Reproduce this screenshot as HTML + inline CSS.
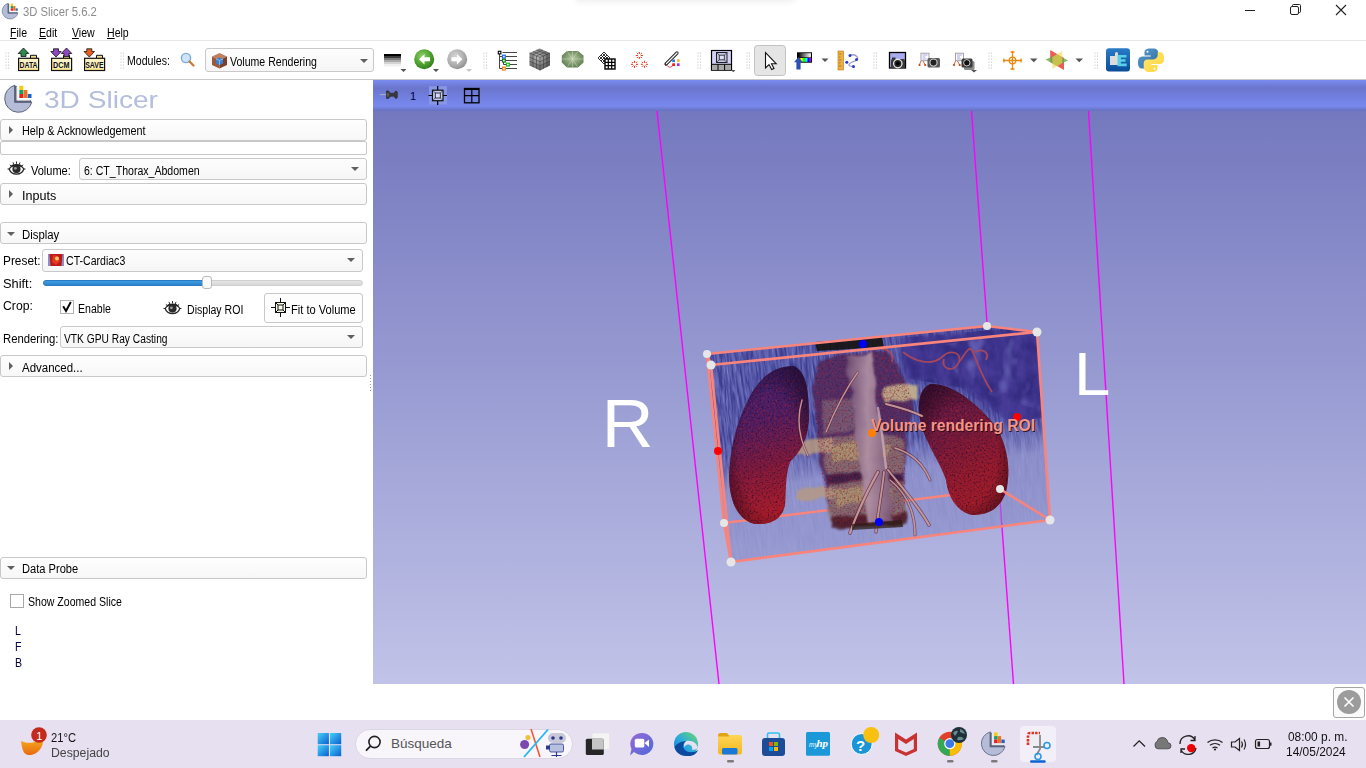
<!DOCTYPE html>
<html><head><meta charset="utf-8">
<style>
*{box-sizing:border-box;margin:0;padding:0}
html,body{width:1366px;height:768px;overflow:hidden;background:#fff;font-family:"Liberation Sans",sans-serif;font-size:12px;color:#000}
.a{position:absolute}
.t{position:absolute;white-space:nowrap;line-height:1;transform-origin:0 0;transform:scaleX(.88)}
.box{position:absolute;border:1px solid #c8c8c8;border-radius:3px;background:linear-gradient(#fefefe,#f7f7f7)}
.combo{position:absolute;border:1px solid #c9c9c9;border-radius:3px;background:linear-gradient(#fdfdfd,#f6f6f6)}
.arr{position:absolute;width:0;height:0;border-left:4px solid transparent;border-right:4px solid transparent;border-top:4px solid #606060}
.rt{position:absolute;width:0;height:0;border-top:4px solid transparent;border-bottom:4px solid transparent;border-left:4px solid #606060}
.dn{position:absolute;width:0;height:0;border-left:4px solid transparent;border-right:4px solid transparent;border-top:4px solid #606060}
.grip{position:absolute;width:5px;height:17px;background-image:radial-gradient(circle at 1px 1px,#b4b4b4 0.7px,transparent 1px);background-size:3px 3px}
svg{position:absolute;overflow:visible}
</style></head><body>
<div id="top"></div>
<!-- title bar -->
<div class="a" style="left:575px;top:-8px;width:220px;height:8px;border-radius:6px;box-shadow:0 2px 6px rgba(0,0,0,.07)"></div>
<div class="t" style="left:23px;top:6px;font-size:12.5px;color:#8c8c8c;transform:scaleX(.9)">3D Slicer 5.6.2</div>
<svg style="left:1240px;top:4px" width="110" height="14">
 <line x1="5" y1="6.5" x2="15" y2="6.5" stroke="#222" stroke-width="1"/>
 <rect x="50.5" y="2.5" width="8" height="8" rx="1.5" fill="none" stroke="#222" stroke-width="1"/>
 <path d="M52.5 2.5 V1.5 a1 1 0 0 1 1 -1 H59.5 a1 1 0 0 1 1 1 V7.5 a1 1 0 0 1 -1 1 H58.5" fill="none" stroke="#222" stroke-width="1"/>
 <path d="M96 1 L106 11 M106 1 L96 11" stroke="#222" stroke-width="1.1"/>
</svg>
<!-- menu -->
<div class="t" style="left:10px;top:27px"><u>F</u>ile</div>
<div class="t" style="left:39px;top:27px"><u>E</u>dit</div>
<div class="t" style="left:72px;top:27px"><u>V</u>iew</div>
<div class="t" style="left:107px;top:27px"><u>H</u>elp</div>
<div class="a" style="left:0;top:40px;width:1366px;height:1px;background:#e6e6e6"></div>
<!-- toolbar -->
<div class="a" style="left:0;top:79px;width:1366px;height:1px;background:#c9c9c9"></div>
<div class="t" style="left:127px;top:55px">Modules:</div>
<div class="combo" style="left:205px;top:48px;width:169px;height:24px"></div>
<div class="t" style="left:230px;top:56px">Volume Rendering</div>
<div class="arr" style="left:360px;top:59px"></div>

<!-- toolbar icons -->
<svg style="left:0;top:0" width="1366" height="80">
 <defs>
  <radialGradient id="gball" cx="0.4" cy="0.35" r="0.7"><stop offset="0" stop-color="#8fd06a"/><stop offset="0.6" stop-color="#4ea02e"/><stop offset="1" stop-color="#2e7a1a"/></radialGradient>
  <radialGradient id="wball" cx="0.4" cy="0.35" r="0.7"><stop offset="0" stop-color="#d4d4d4"/><stop offset="0.6" stop-color="#b0b0b0"/><stop offset="1" stop-color="#8c8c8c"/></radialGradient>
  <linearGradient id="hgrad" x1="0" y1="0" x2="0" y2="1"><stop offset="0" stop-color="#000"/><stop offset="0.2" stop-color="#000"/><stop offset="0.2" stop-color="#3a3a3a"/><stop offset="0.36" stop-color="#3a3a3a"/><stop offset="0.36" stop-color="#7a7a7a"/><stop offset="0.52" stop-color="#7a7a7a"/><stop offset="0.52" stop-color="#aaa"/><stop offset="0.68" stop-color="#aaa"/><stop offset="0.68" stop-color="#d4d4d4"/><stop offset="0.84" stop-color="#d4d4d4"/><stop offset="0.84" stop-color="#f0f0f0"/><stop offset="1" stop-color="#f0f0f0"/></linearGradient>
  <linearGradient id="cmgrad" x1="0" y1="0" x2="1" y2="0"><stop offset="0" stop-color="#000"/><stop offset="1" stop-color="#fff"/></linearGradient>
  <linearGradient id="rainbow" x1="0" y1="0" x2="1" y2="0"><stop offset="0" stop-color="#f00"/><stop offset="0.25" stop-color="#ff0"/><stop offset="0.45" stop-color="#0f0"/><stop offset="0.65" stop-color="#0ff"/><stop offset="0.8" stop-color="#00f"/><stop offset="1" stop-color="#f0f"/></linearGradient>
  <radialGradient id="cube" cx="0.4" cy="0.4" r="0.7"><stop offset="0" stop-color="#b8b8b8"/><stop offset="1" stop-color="#505050"/></radialGradient>
  <radialGradient id="oct" cx="0.5" cy="0.45" r="0.6"><stop offset="0" stop-color="#b4c8a4"/><stop offset="1" stop-color="#5c7a4a"/></radialGradient>
  <linearGradient id="pyb" x1="0" y1="0" x2="1" y2="1"><stop offset="0" stop-color="#5a9fd4"/><stop offset="1" stop-color="#306998"/></linearGradient>
  <linearGradient id="pyy" x1="0" y1="0" x2="1" y2="1"><stop offset="0" stop-color="#ffe873"/><stop offset="1" stop-color="#ffd43b"/></linearGradient>
  <linearGradient id="extb" x1="0" y1="0" x2="0" y2="1"><stop offset="0" stop-color="#2a7cc8"/><stop offset="1" stop-color="#0a4c98"/></linearGradient>
 </defs>
 <!-- grips -->
 <g fill="#b8b8b8">
  <g id="gr"><circle cx="6" cy="53" r=".6"/><circle cx="8.5" cy="53" r=".6"/><circle cx="6" cy="56" r=".6"/><circle cx="8.5" cy="56" r=".6"/><circle cx="6" cy="59" r=".6"/><circle cx="8.5" cy="59" r=".6"/><circle cx="6" cy="62" r=".6"/><circle cx="8.5" cy="62" r=".6"/><circle cx="6" cy="65" r=".6"/><circle cx="8.5" cy="65" r=".6"/><circle cx="6" cy="68" r=".6"/><circle cx="8.5" cy="68" r=".6"/></g>
  <use href="#gr" x="115"/><use href="#gr" x="478"/><use href="#gr" x="692"/><use href="#gr" x="741"/><use href="#gr" x="868"/><use href="#gr" x="983"/><use href="#gr" x="1089"/>
 </g>
 <!-- DATA / DCM / SAVE -->
 <g id="fold">
  <path d="M30.5 58.5 V55.3 H36.5 V58.5" fill="#f2e08a" stroke="#111" stroke-width="1"/>
  <rect x="18.6" y="58.3" width="20" height="12.2" fill="#fbf2c4" stroke="#111" stroke-width="1.2"/>
  <rect x="19.2" y="68.6" width="18.8" height="1.4" fill="#e8d47a"/>
 </g>
 <use href="#fold" x="33"/><use href="#fold" x="66"/>
 <g font-family="Liberation Sans" font-weight="bold" font-size="8.2" fill="#111" lengthAdjust="spacingAndGlyphs">
  <text x="19.5" y="67.6" textLength="18" lengthAdjust="spacingAndGlyphs">DATA</text>
  <text x="53" y="67.6" textLength="16.5" lengthAdjust="spacingAndGlyphs">DCM</text>
  <text x="85.2" y="67.6" textLength="18.5" lengthAdjust="spacingAndGlyphs">SAVE</text>
 </g>
 <path d="M23.5 48 L28.8 53.5 H26 V56.5 H21 V53.5 H18.2 Z" fill="#2e8a4e" stroke="#111" stroke-width=".8"/>
 <path d="M56 57 L50.8 51.5 H53.5 V48.8 H58.5 V51.5 H61.2 Z" fill="#9048c0" stroke="#111" stroke-width=".8"/>
 <path d="M66.5 48 L71.8 53.5 H69 V56.5 H64 V53.5 H61.2 Z" fill="#9048c0" stroke="#111" stroke-width=".8"/>
 <path d="M89.3 57 L84 51.5 H86.8 V48.8 H91.8 V51.5 H94.5 Z" fill="#e8601c" stroke="#111" stroke-width=".8"/>
 <!-- search -->
 <circle cx="186" cy="58" r="4.6" fill="#cfe4f8" stroke="#7aaad8" stroke-width="1.4"/>
 <path d="M189.5 61.5 L193.5 65.5" stroke="#c88038" stroke-width="2.4" stroke-linecap="round"/>
 <!-- module combo icon -->
 <path d="M212 56.5 L219.5 53 L227 56.5 L219.5 60 Z" fill="#c08060"/>
 <path d="M212 56.5 L219.5 60 V68.5 L212 65 Z" fill="#9a5a3a"/>
 <path d="M227 56.5 L219.5 60 V68.5 L227 65 Z" fill="#7a4028"/>
 <path d="M216 59 L219.5 57.5 L223 59 V63.5 L219.5 65 L216 63.5 Z" fill="#3a80d0"/>
 <path d="M216 59 L219.5 60.5 L223 59 M219.5 60.5 V65" stroke="#a8d0f8" stroke-width=".7" fill="none"/>
 <!-- gradient / nav -->
 <rect x="384" y="54" width="17" height="12.5" fill="url(#hgrad)"/>
 <path d="M400.5 69 h6 l-3 3 z M433 69 h6 l-3 3 z" fill="#555"/>
 <path d="M466 69 h6 l-3 3 z" fill="#c8c8c8"/>
 <circle cx="424.2" cy="59.3" r="10" fill="url(#gball)"/>
 <path d="M419 59.3 L424.5 54 V57.3 H430 V61.3 H424.5 V64.6 Z" fill="#fff"/>
 <circle cx="457.2" cy="59.3" r="10" fill="url(#wball)"/>
 <path d="M462.4 59.3 L456.9 54 V57.3 H451.4 V61.3 H456.9 V64.6 Z" fill="#fff"/>
 <!-- tree -->
 <g stroke="#444" stroke-width="1" fill="none">
  <path d="M502.5 52.5 H517 M506 56.5 H517 M506 60.5 H517 M510 64.5 H517 M506 68.5 H517"/>
  <path d="M499.5 54 V68.5 H502 M499.5 56.5 H502 M499.5 60.5 H502 M503.5 62 V64.5 H506"/>
 </g>
 <rect x="498.3" y="51.3" width="2.6" height="2.6" fill="#fff" stroke="#000" stroke-width="1.1"/>
 <rect x="502.5" y="55.2" width="2.8" height="2.8" fill="#fff" stroke="#1a6ae8" stroke-width="1.2"/>
 <rect x="502.5" y="59.2" width="2.8" height="2.8" fill="#fff" stroke="#0a7a1a" stroke-width="1.2"/>
 <rect x="506.5" y="63.2" width="2.8" height="2.8" fill="#fff" stroke="#1ab81a" stroke-width="1.2"/>
 <rect x="502.5" y="67.2" width="2.8" height="2.8" fill="#fff" stroke="#f08010" stroke-width="1.2"/>
 <!-- cube -->
 <path d="M539.5 48.5 L550 53 V65.5 L540 70.5 L529.5 65.5 V53 Z" fill="url(#cube)"/>
 <g stroke="#303030" stroke-width=".6" opacity=".8" fill="none">
  <path d="M529.5 53 L540 57.5 L550 53 M540 57.5 V70.5 M533 51.5 L543.5 56 M536.5 50 L547 54.5 M543 50 L533 54.6 M546.5 51.5 L536.5 56 M529.5 57.2 L540 61.7 L550 57.2 M529.5 61.3 L540 65.8 L550 61.3 M533 54.5 V67.2 M536.5 56 V68.8 M543.5 56 V68.8 M547 54.5 V67.2"/>
 </g>
 <!-- octagon -->
 <path d="M567 51 H578 L583.5 55.5 V62.5 L578 67.5 H567 L561.8 62.5 V55.5 Z" fill="url(#oct)"/>
 <path d="M567 51 L578 67.5 M578 51 L567 67.5 M561.8 59 H583.5 M572.5 51 V67.5" stroke="#d8e8c8" stroke-width=".6" opacity=".7"/>
 <!-- grid -->
 <g stroke="#000" stroke-width=".8" fill="none">
  <path d="M598 58 L604 52 L610 58 L604 64 Z M601 55 L607 61 M601 61 L607 55 M599.5 56.5 L605.5 62.5 M602.5 53.5 L608.5 59.5 M599.5 59.5 L605.5 53.5 M602.5 62.5 L608.5 56.5"/>
 </g>
 <rect x="605" y="59" width="10" height="10" fill="#fff" stroke="#000" stroke-width="1.4"/>
 <path d="M608.3 59 V69 M611.7 59 V69 M605 62.3 H615 M605 65.7 H615" stroke="#000" stroke-width="1.2"/>
 <!-- asterisks -->
 <g stroke="#e82a10" stroke-width="1" id="ast">
  <path d="M639.3 52 V54 M639.3 57 V59 M635.8 55.5 H637.8 M640.8 55.5 H642.8 M636.8 53 L638 54.2 M640.6 56.8 L641.8 58 M641.8 53 L640.6 54.2 M638 56.8 L636.8 58"/>
 </g>
 <use href="#ast" x="-4.8" y="8.8"/><use href="#ast" x="5.1" y="8.8"/>
 <!-- paint -->
 <path d="M666 64 L677 53" stroke="#222" stroke-width="3.2" stroke-linecap="round"/>
 <path d="M666.5 63.5 L677 53" stroke="#f4f4f4" stroke-width="1.4" stroke-linecap="round"/>
 <path d="M666 64.5 Q670 70 673.5 64.5" stroke="#e03050" stroke-width=".9" fill="none"/>
 <rect x="672.2" y="59.5" width="2.8" height="2.6" fill="#2a7ae8"/><rect x="677" y="59.2" width="2.6" height="2.8" fill="#f8b818"/>
 <rect x="672.2" y="63.3" width="2.8" height="2.8" fill="#e82020"/><rect x="677" y="63.3" width="2.6" height="2.8" fill="#b028e0"/>
 <!-- layout -->
 <rect x="711.5" y="50.5" width="20" height="19.7" fill="#d2d2f4" stroke="#000" stroke-width="1.2"/>
 <rect x="712" y="64.5" width="19" height="5.4" fill="#a8a8a8"/>
 <path d="M711.5 64.3 H731.5 M718 64.3 V70 M724.6 64.3 V70" stroke="#000" stroke-width="1"/>
 <rect x="716.5" y="52.5" width="10.5" height="10" fill="#c4c4e8" stroke="#222" stroke-width="1"/>
 <rect x="719.3" y="55.2" width="5" height="4.6" fill="#e0e0f4" stroke="#333" stroke-width=".9"/>
 <path d="M716.5 52.5 L719.3 55.2 M727 52.5 L724.3 55.2 M716.5 62.5 L719.3 59.8 M727 62.5 L724.3 59.8" stroke="#333" stroke-width=".7"/>
 <path d="M731 70 h4.5 l-2.2 2.2 z" fill="#555"/>
 <!-- selected pointer -->
 <rect x="754.5" y="45.5" width="31" height="30" rx="3" fill="#e5e5e5" stroke="#c2c2c2" stroke-width="1"/>
 <path d="M765.5 52.5 V68 L769 64.6 L771.7 69.5 L774 68.4 L771.5 63.7 H776.2 Z" fill="#fff" stroke="#111" stroke-width="1.1" stroke-linejoin="miter"/>
 <!-- colormap -->
 <rect x="797" y="52.3" width="15" height="10.4" fill="#000"/>
 <rect x="798.3" y="53.2" width="12.6" height="4.2" fill="url(#cmgrad)"/>
 <rect x="798.3" y="58" width="12.6" height="3.8" fill="url(#rainbow)"/>
 <path d="M798.5 57 L803 62.3 H800.6 V69.5 H796.4 V62.3 H794 Z" fill="#2a50b8"/>
 <path d="M821.5 58.5 h7 l-3.5 3.5 z" fill="#555"/>
 <!-- ruler curve -->
 <rect x="838" y="51" width="5.5" height="19" fill="#f0b040" stroke="#b07818" stroke-width=".6"/>
 <path d="M839 54 h2.5 M839 57 h1.5 M839 60 h2.5 M839 63 h1.5 M839 66 h2.5" stroke="#805010" stroke-width=".6"/>
 <path d="M850 55.5 C856 53 861 59 855 61 C849 63 846 66 853 66.5" stroke="#9a9ac8" stroke-width="1.3" fill="none"/>
 <g fill="#2a3ad0"><circle cx="850" cy="55.5" r="1.5"/><circle cx="856.5" cy="59.5" r="1.5"/><circle cx="846.8" cy="62.2" r="1.5"/><circle cx="853.5" cy="66.5" r="1.5"/></g>
 <!-- camera -->
 <rect x="889.5" y="52.5" width="16" height="15.5" fill="#a8acee" stroke="#000" stroke-width="1.3"/>
 <rect x="892" y="57.5" width="3.5" height="2" fill="#333"/>
 <rect x="891" y="59" width="14" height="9" rx="1.5" fill="#3a3a3a"/>
 <circle cx="897.8" cy="63.6" r="4.2" fill="#222" stroke="#e8e8e8" stroke-width="1.3"/>
 <circle cx="897.8" cy="63.6" r="1.8" fill="#000"/>
 <g id="scam">
  <rect x="921" y="53.2" width="8" height="7.5" fill="#fff" stroke="#999" stroke-width=".9"/>
  <path d="M922.5 55 h5 M922.5 57 h3 M922.5 59 h4" stroke="#6a6ad8" stroke-width=".6"/>
  <path d="M921 61 L919.5 64.5 M923 61 L925 64.5" stroke="#c04010" stroke-width=".8"/>
  <circle cx="919.5" cy="65" r="1.1" fill="#c84010"/><circle cx="925.2" cy="65" r="1.1" fill="#c84010"/>
 </g>
 <rect x="927.5" y="58" width="12.5" height="9.5" rx="1.5" fill="#5a5a5a"/>
 <circle cx="933.5" cy="62.6" r="3.6" fill="#222" stroke="#d0d0d0" stroke-width="1.1"/>
 <use href="#scam" x="34.5"/>
 <rect x="964" y="61" width="10.5" height="9" rx="1.5" fill="#8a8a8a"/>
 <rect x="961.5" y="58.5" width="11" height="9" rx="1.5" fill="#3a3a3a"/>
 <circle cx="966.8" cy="62.8" r="3.2" fill="#111" stroke="#ccc" stroke-width="1"/>
 <path d="M971 70 h6 l-3 2.6 z" fill="#555"/>
 <!-- crosshair -->
 <g stroke="#e88a10" stroke-width="1.3" fill="none">
  <path d="M1012.5 51 V70 M1003 60.5 H1022"/>
  <circle cx="1012.5" cy="60.5" r="3.3"/>
  <path d="M1010.5 52 h4 M1010.5 69 h4 M1004 58.5 v4 M1021 58.5 v4"/>
 </g>
 <path d="M1030 58.5 h7.5 l-3.75 3.7 z M1075.5 58.5 h7.5 l-3.75 3.7 z" fill="#555"/>
 <!-- slice planes -->
 <path d="M1050.2 50 L1064 58 L1064 70 L1050.2 62 Z" fill="#e84038" opacity=".85"/>
 <path d="M1045.5 59.5 L1057 54.5 L1068 60.5 L1056.5 66 Z" fill="#6aaa48" opacity=".8"/>
 <path d="M1052.4 57 L1062.3 51 L1062.3 63 L1052.4 69 Z" fill="#f4d850" opacity=".6"/>
 <!-- extension -->
 <rect x="1106" y="48.2" width="24" height="23.4" rx="3" fill="url(#extb)"/>
 <path d="M1110 56 h5 v-2.5 a1.5 1.5 0 0 1 3 0 v2.5 h2 v9 h-10 z" fill="#dcdcdc"/>
 <path d="M1117.5 55 h9 v2.6 h-5.6 v1.7 h4.6 v2.5 h-4.6 v1.8 h5.8 v2.6 h-9.2 z" fill="#5ad0e8"/>
 <!-- python -->
 <path d="M1150.5 48.5 c-6 0 -6 2.6 -6 4.5 v2.6 h6.2 v1 h-8.6 c-2.6 0 -4.2 2 -4.2 6 c0 4 1.6 6 4 6 h2.4 v-3.2 c0 -2.4 2 -4.3 4.4 -4.3 h6 c2 0 3.6 -1.6 3.6 -3.6 v-4.6 c0 -2 -1.7 -3.9 -3.8 -4.3 c-1.3 -.2 -2.6 -.1 -4 -.1 z" fill="url(#pyb)"/>
 <path d="M1151.5 72 c6 0 6 -2.6 6 -4.5 v-2.6 h-6.2 v-1 h8.6 c2.6 0 4.2 -2 4.2 -6 c0 -4 -1.6 -6 -4 -6 h-2.4 v3.2 c0 2.4 -2 4.3 -4.4 4.3 h-6 c-2 0 -3.6 1.6 -3.6 3.6 v4.6 c0 2 1.7 3.9 3.8 4.3 c1.3 .2 2.6 .1 4 .1 z" fill="url(#pyy)"/>
 <circle cx="1147.5" cy="51.8" r="1" fill="#fff"/><circle cx="1154.5" cy="68.8" r="1" fill="#fff"/>
 <!-- title icon -->
 <use href="#logo" transform="translate(2.2 3) scale(.58) translate(-4.7 -84.7)"/>
</svg>

<!-- left panel -->
<div class="t" style="left:44px;top:88px;font-size:24px;color:#b4bedc;transform:scaleX(1.17)">3D Slicer</div>

<div class="box" style="left:0;top:119px;width:367px;height:22px"></div>
<div class="rt" style="left:9px;top:126px"></div>
<div class="t" style="left:22px;top:125px;transform:scaleX(0.904)">Help &amp; Acknowledgement</div>
<div class="a" style="left:0;top:141px;width:367px;height:14px;border:1px solid #c8c8c8;border-radius:2px"></div>
<div class="t" style="left:31px;top:165px;transform:scaleX(0.917)">Volume:</div>
<div class="combo" style="left:79px;top:158px;width:288px;height:22px"></div>
<div class="t" style="left:84px;top:165px">6: CT_Thorax_Abdomen</div>
<div class="arr" style="left:351px;top:167px"></div>
<div class="box" style="left:0;top:183px;width:367px;height:22px"></div>
<div class="rt" style="left:9px;top:190px"></div>
<div class="t" style="left:22px;top:190px;transform:scaleX(1.046)">Inputs</div>

<div class="box" style="left:0;top:222px;width:367px;height:22px"></div>
<div class="dn" style="left:7px;top:232px"></div>
<div class="t" style="left:22px;top:229px;transform:scaleX(0.946)">Display</div>
<div class="t" style="left:3px;top:255px;transform:scaleX(0.988)">Preset:</div>
<div class="combo" style="left:42px;top:249px;width:321px;height:23px"></div>
<div class="t" style="left:66px;top:255px">CT-Cardiac3</div>
<div class="arr" style="left:347px;top:258px"></div>
<div class="t" style="left:3px;top:278px;transform:scaleX(1.069)">Shift:</div>
<div class="a" style="left:43px;top:280px;width:320px;height:6px;border-radius:3px;background:linear-gradient(#e6e6e6,#d8d8d8);border:1px solid #cfcfcf"></div>
<div class="a" style="left:43px;top:280px;width:163px;height:6px;border-radius:3px;background:linear-gradient(#3f9be0,#2a85d0);border:1px solid #2a7bc4"></div>
<div class="a" style="left:202px;top:276px;width:10px;height:13px;border-radius:3px;background:#fafafa;border:1px solid #b8b8b8"></div>
<div class="t" style="left:3px;top:300px;transform:scaleX(1.018)">Crop:</div>
<div class="a" style="left:60px;top:300px;width:14px;height:14px;border:1px solid #b4b4b4;background:#fff"></div>
<div class="t" style="left:78px;top:303px">Enable</div>
<div class="t" style="left:187px;top:304px">Display ROI</div>
<div class="box" style="left:264px;top:293px;width:99px;height:30px;background:#fdfdfd"></div>
<div class="t" style="left:291px;top:304px;transform:scaleX(0.925)">Fit to Volume</div>
<div class="t" style="left:3px;top:333px;transform:scaleX(0.943)">Rendering:</div>
<div class="combo" style="left:60px;top:326px;width:303px;height:22px"></div>
<div class="t" style="left:64px;top:333px;transform:scaleX(0.853)">VTK GPU Ray Casting</div>
<div class="arr" style="left:347px;top:335px"></div>
<div class="box" style="left:0;top:355px;width:367px;height:22px"></div>
<div class="rt" style="left:9px;top:362px"></div>
<div class="t" style="left:22px;top:362px;transform:scaleX(0.957)">Advanced...</div>
<svg style="left:369px;top:374px" width="4" height="20"><g fill="#9a9a9a"><rect x="1" y="1" width="1" height="1"/><rect x="1" y="4" width="1" height="1"/><rect x="1" y="7" width="1" height="1"/><rect x="1" y="10" width="1" height="1"/><rect x="1" y="13" width="1" height="1"/><rect x="1" y="16" width="1" height="1"/></g></svg>

<div class="box" style="left:0;top:557px;width:367px;height:22px"></div>
<div class="dn" style="left:7px;top:566px"></div>
<div class="t" style="left:22px;top:563px;transform:scaleX(0.925)">Data Probe</div>
<div class="a" style="left:10px;top:594px;width:14px;height:14px;border:1px solid #a8a8a8;background:#fff"></div>
<div class="t" style="left:28px;top:596px">Show Zoomed Slice</div>
<div class="t" style="left:15px;top:625px;color:#000040">L</div>
<div class="t" style="left:15px;top:641px;color:#000040">F</div>
<div class="t" style="left:15px;top:657px;color:#000040">B</div>

<svg style="left:0;top:0" width="372" height="680">
 <defs>
  <g id="logo">
   <path d="M15 85.15 A13.8 13.8 0 1 0 31.85 102 L15 102 Z" fill="#b4bcd8" stroke="#505870" stroke-width=".9"/>
   <path d="M15.5 86 V101.5 H31" fill="none" stroke="#59627a" stroke-width="2.6"/>
   <path d="M17.2 87 V100 H30" fill="none" stroke="#e8f0f0" stroke-width="1.2"/>
   <rect x="19.3" y="85.8" width="4" height="4.2" fill="#f2cc10"/><rect x="19.3" y="90" width="4" height="4" fill="#18a060"/><rect x="19.3" y="94" width="4" height="4" fill="#e82020"/>
   <rect x="23.6" y="90" width="3.8" height="8" fill="#f07020"/><rect x="27.7" y="94" width="3.8" height="4" fill="#2060c8"/>
  </g>
  <g id="eye">
   <path d="M1.2 7.5 C4 2.2 13 2.2 15.8 7.5 C13.8 14.2 3.2 14.2 1.2 7.5 Z" fill="#fff" stroke="#2a2a2a" stroke-width="1.3"/>
   <circle cx="8.5" cy="7.6" r="4.1" fill="#2a2a2a"/><circle cx="7.4" cy="6.8" r="1.4" fill="#9a9a9a"/>
   <path d="M3 5 C5 2.6 12 2.6 14 5" fill="none" stroke="#222" stroke-width="1.6"/>
   <path d="M-.5 7.5 H1.8 M1.8 3.3 L3.4 4.7 M5 .9 L5.8 3 M8.5 0 V2.3 M12 .9 L11.2 3 M15.2 3.3 L13.6 4.7 M17.5 7.5 H15.2" stroke="#2a2a2a" stroke-width="1"/>
  </g>
 </defs>
 <use href="#logo"/>
 <use href="#eye" x="8" y="161.5"/>
 <use href="#eye" x="164" y="301"/>
 <rect x="48" y="254" width="16" height="12" fill="#8a90c8"/>
 <path d="M49.5 254 H62.5 L61.5 266 H50.5 Z" fill="#c01818"/>
 <path d="M53 255 L58 256 L60 261 L56 265 L52 262 Z" fill="#e03a20"/>
 <circle cx="57" cy="258.5" r="2" fill="#e8d060"/>
 <path d="M63.2 306.3 L66 311 L70.8 302" fill="none" stroke="#000" stroke-width="1.9" stroke-linejoin="miter"/>
 <g stroke="#111" stroke-width="1" fill="none">
  <path d="M280.5 298 V317 M271 307.5 H290"/>
  <rect x="275.5" y="302.5" width="10" height="10" fill="#fbfbee"/>
  <rect x="278" y="305" width="5" height="5"/>
  <path d="M275.5 302.5 L278 305 M285.5 302.5 L283 305 M275.5 312.5 L278 310 M285.5 312.5 L283 310"/>
 </g>
</svg>
<!-- 3D view -->
<div class="a" style="left:373px;top:80px;width:993px;height:604px;background:linear-gradient(#7478be 31px,#c1c3e8)"></div>
<div class="a" style="left:373px;top:80px;width:993px;height:31px;background:linear-gradient(#7a8cf2 0px,#6b75cb 8px,#7280e2 18px,#7888ee 26px,#6e7ad0 29px,#6670c2 31px)"></div>
<div class="t" style="left:410px;top:91px;font-size:11px;color:#000030;transform:none">1</div>
<svg style="left:0;top:0" width="500" height="112">
 <path d="M380 94.6 H387" stroke="#b0b0b8" stroke-width="1"/>
 <path d="M386.5 91 Q388.5 90.3 389.5 92 L390 93.2 H394.5 L395 91.5 Q396.5 90.5 397.3 92 V97.5 Q396.5 99 395 98 L394.5 96.2 H390 L389.5 97.4 Q388.5 99.2 386.5 98.3 Z" fill="#3a3a3a" stroke="#222" stroke-width=".6"/>
 <path d="M388 93 V96.5" stroke="#8a8a8a" stroke-width=".8"/>
 <rect x="429" y="86.2" width="18" height="18.4" fill="#8896e6"/>
 <path d="M437.7 86 V105 M428.5 95.5 H447" stroke="#000" stroke-width="1.2"/>
 <rect x="432.5" y="90.2" width="10.5" height="10.5" fill="#c4ccf6" stroke="#111" stroke-width="1.2"/>
 <rect x="435.3" y="93" width="5" height="5" fill="#d8dcfa" stroke="#222" stroke-width=".9"/>
 <path d="M432.5 90.2 L435.3 93 M443 90.2 L440.3 93 M432.5 100.7 L435.3 98 M443 100.7 L440.3 98" stroke="#222" stroke-width=".6"/>
 <rect x="464.5" y="88.5" width="14.5" height="14.3" fill="none" stroke="#000" stroke-width="1.3"/>
 <path d="M464.5 89.2 H479" stroke="#000" stroke-width="1.6"/>
 <path d="M471.8 88.5 V102.8 M464.5 95.6 H479" stroke="#000" stroke-width="1.2"/>
</svg>
<svg style="left:373px;top:111px" width="993" height="573">
 <g stroke="#ff00ff" stroke-width="1.4" fill="none">
  <line x1="284" y1="0" x2="346" y2="573"/>
  <line x1="598.5" y1="0" x2="640.5" y2="573"/>
  <line x1="715.5" y1="0" x2="751" y2="573"/>
 </g>
 <text transform="translate(228.7 336) scale(1.06 1)" font-family="Liberation Sans" font-size="67.7" fill="#fff">R</text>
 <text transform="translate(701 284) scale(1.06 1)" font-family="Liberation Sans" font-size="61.6" fill="#fff">L</text>
</svg>


<!-- volume rendering -->
<svg style="left:0;top:0" width="1366" height="768">
 <defs>
  <filter id="streak" color-interpolation-filters="sRGB" x="0" y="0" width="100%" height="100%" filterUnits="userSpaceOnUse">
   <feTurbulence type="fractalNoise" baseFrequency="0.55 0.04" numOctaves="3" seed="7" result="n"/>
   <feColorMatrix in="n" type="matrix" values="0 0 0 0 0.24  0 0 0 0 0.24  0 0 0 0 0.56  -3.4 0 0 0 2.15" result="c"/>
   <feComposite in="c" in2="SourceGraphic" operator="in"/>
  </filter>
  <filter id="streakL" color-interpolation-filters="sRGB" x="0" y="0" width="100%" height="100%" filterUnits="userSpaceOnUse">
   <feTurbulence type="fractalNoise" baseFrequency="0.6 0.05" numOctaves="2" seed="2" result="n"/>
   <feColorMatrix in="n" type="matrix" values="0 0 0 0 0.6  0 0 0 0 0.62  0 0 0 0 0.86  2.2 0 0 0 -1.25" result="c"/>
   <feComposite in="c" in2="SourceGraphic" operator="in"/>
  </filter>
  <filter id="mottle" color-interpolation-filters="sRGB" x="0" y="0" width="100%" height="100%" filterUnits="userSpaceOnUse">
   <feTurbulence type="fractalNoise" baseFrequency="0.08 0.05" numOctaves="3" seed="11" result="n"/>
   <feColorMatrix in="n" type="matrix" values="0 0 0 0 0.20  0 0 0 0 0.17  0 0 0 0 0.50  -2.4 0 0 0 1.6" result="c"/>
   <feComposite in="c" in2="SourceGraphic" operator="in"/>
  </filter>
  <filter id="mottleL" color-interpolation-filters="sRGB" x="0" y="0" width="100%" height="100%" filterUnits="userSpaceOnUse">
   <feTurbulence type="fractalNoise" baseFrequency="0.06 0.045" numOctaves="2" seed="4" result="n"/>
   <feColorMatrix in="n" type="matrix" values="0 0 0 0 0.55  0 0 0 0 0.56  0 0 0 0 0.85  3.5 0 0 0 -2.0" result="c"/>
   <feComposite in="c" in2="SourceGraphic" operator="in"/>
  </filter>
  <filter id="speck" color-interpolation-filters="sRGB" x="0" y="0" width="100%" height="100%" filterUnits="userSpaceOnUse">
   <feTurbulence type="fractalNoise" baseFrequency="0.55 0.4" numOctaves="2" seed="5" result="n"/>
   <feColorMatrix in="n" type="matrix" values="0 0 0 0 0.72  0 0 0 0 0.12  0 0 0 0 0.2  2.4 0 0 0 -1.1" result="c"/>
   <feComposite in="c" in2="SourceGraphic" operator="in"/>
  </filter>
  <filter id="dspeck" color-interpolation-filters="sRGB" x="0" y="0" width="100%" height="100%" filterUnits="userSpaceOnUse">
   <feTurbulence type="fractalNoise" baseFrequency="0.5 0.6" numOctaves="2" seed="9" result="n"/>
   <feColorMatrix in="n" type="matrix" values="0 0 0 0 0.16  0 0 0 0 0.04  0 0 0 0 0.2  3.0 0 0 0 -1.5" result="c"/>
   <feComposite in="c" in2="SourceGraphic" operator="in"/>
  </filter>
  <filter id="warp" color-interpolation-filters="sRGB" x="-10%" y="-10%" width="120%" height="120%">
   <feTurbulence type="fractalNoise" baseFrequency="0.06" numOctaves="2" seed="21" result="t"/>
   <feDisplacementMap in="SourceGraphic" in2="t" scale="8" xChannelSelector="R" yChannelSelector="G" result="d"/>
   <feGaussianBlur in="d" stdDeviation="1.1"/>
  </filter>
  <filter id="blur1" x="-20%" y="-20%" width="140%" height="140%"><feGaussianBlur stdDeviation="1"/></filter>
  <filter id="blur2" x="-20%" y="-20%" width="140%" height="140%"><feGaussianBlur stdDeviation="3"/></filter>
  <filter id="blur4" x="-30%" y="-30%" width="160%" height="160%"><feGaussianBlur stdDeviation="5"/></filter>
  <linearGradient id="kidL" x1="0" y1="0" x2="0.15" y2="1">
   <stop offset="0" stop-color="#34227a"/><stop offset="0.4" stop-color="#4a1e64"/><stop offset="0.7" stop-color="#7a1a3c"/><stop offset="1" stop-color="#a81c28"/>
  </linearGradient>
  <linearGradient id="kidR" x1="0" y1="0" x2="0.35" y2="1">
   <stop offset="0" stop-color="#5a1a4a"/><stop offset="0.45" stop-color="#6c1a3c"/><stop offset="0.8" stop-color="#901a2c"/><stop offset="1" stop-color="#9a1c28"/>
  </linearGradient>
  <linearGradient id="vert" x1="0" y1="0" x2="0" y2="1"><stop offset="0" stop-color="#a89478"/><stop offset=".45" stop-color="#8c7070"/><stop offset="1" stop-color="#6a4468"/></linearGradient>
  <linearGradient id="aorta" x1="0" y1="0" x2="1" y2="0"><stop offset="0" stop-color="#6e4c72"/><stop offset=".45" stop-color="#b090a4"/><stop offset="1" stop-color="#7a5676"/></linearGradient>
  <radialGradient id="kshade" cx=".5" cy=".55" r=".62"><stop offset="0" stop-color="#000" stop-opacity="0"/><stop offset=".6" stop-color="#000" stop-opacity="0"/><stop offset="1" stop-color="#100418" stop-opacity=".55"/></radialGradient>
  <linearGradient id="fade" x1="0" y1="0" x2="0" y2="1">
   <stop offset="0" stop-color="#fff"/><stop offset="0.47" stop-color="#fff"/><stop offset="0.6" stop-color="#303030"/><stop offset="1" stop-color="#101010"/>
  </linearGradient>
  <mask id="fm" maskUnits="userSpaceOnUse" x="690" y="310" width="380" height="270">
   <rect x="690" y="310" width="380" height="270" fill="url(#fade)" transform="rotate(-7 880 440)"/>
  </mask>
  <clipPath id="hull"><path d="M707 354 L987 326 L1037 332 L1050 520 L731 562 L724 523 Z"/></clipPath>
 </defs>
 <g clip-path="url(#hull)">
  <path d="M707 354 L987 326 L1037 332 L1050 520 L731 562 L724 523 Z" fill="#8c8ecc" opacity="0.45"/>
  <g mask="url(#fm)">
   <path d="M707 354 L987 326 L1037 332 L1050 520 L731 562 L724 523 Z" fill="#5254aa" opacity="0.72"/>
   <g transform="rotate(-6 880 440)">
    <rect x="660" y="290" width="440" height="300" fill="#fff" filter="url(#streak)"/>
    <rect x="660" y="290" width="440" height="300" fill="#fff" filter="url(#streakL)"/>
   </g>
  </g>
  
  <path d="M900 338 L1040 326 L1042 418 L1012 424 L985 405 L962 388 L935 383 L905 378 Z" fill="#443894" opacity=".92" filter="url(#blur2)"/>
  <path d="M900 338 L1040 326 L1042 418 L1012 424 L985 405 L962 388 L935 383 L905 378 Z" fill="#fff" filter="url(#mottle)"/>
  <path d="M940 345 L1040 330 L1042 410 L1000 400 L960 380 Z" fill="#fff" filter="url(#mottleL)" opacity=".45"/>
 </g>
 <path d="M724 523 L1000 489" stroke="#f8847c" stroke-width="2.4" fill="none"/>
 <!-- spine / central -->
 <g filter="url(#warp)">
 <path d="M818 362 C830 356 870 350 885 352 C900 365 912 385 912 410 C905 430 906 455 905 480 L905 520 C880 526 855 528 835 524 C825 500 820 470 818 440 C814 410 812 380 818 362 Z" fill="#4c2c62" opacity=".92"/>
 <path d="M826 440 C845 434 880 433 903 439 C905 452 905 464 903 474 C880 470 848 472 828 478 C824 466 824 452 826 440 Z" fill="#8c7474" opacity=".85"/>
 <path d="M828 484 C846 479 878 477 904 481 C906 494 906 506 905 518 C880 516 850 518 832 522 C828 510 827 496 828 484 Z" fill="#8c7474" opacity=".85"/>
 <path d="M832 446 C850 442 870 442 890 446 L888 458 C870 456 850 458 834 462 Z" fill="#b8a470" opacity=".7"/>
 <path d="M834 490 C852 486 872 486 892 490 L890 503 C872 501 852 503 836 507 Z" fill="#b8a470" opacity=".65"/>
 <path d="M826 476 C848 472 880 471 903 475 L903 482 C880 479 848 481 827 485 Z" fill="#3a1a40" opacity=".85"/>
 <path d="M797 444 C808 439 820 437 832 440 L832 452 C820 452 808 455 797 454 Z" fill="#b89a80" opacity=".85"/>
 <path d="M796 490 C808 486 822 486 834 489 L834 499 C822 498 808 501 796 500 Z" fill="#b89a80" opacity=".8"/>
 <path d="M884 388 C896 383 908 383 918 386 L917 400 C906 400 895 401 884 404 Z" fill="#c8b48c" opacity=".9"/>
 <path d="M822 402 C838 398 852 398 862 401 L860 430 C848 430 836 432 824 436 Z" fill="#8a7480" opacity=".6"/>
 <path d="M832 517 L905 513 L906 524 L834 528 Z" fill="#4a1e28" opacity=".9"/>
 </g>
 <path d="M818 362 C830 356 870 350 885 352 C900 365 912 385 912 410 C905 430 906 455 905 480 L905 520 C880 526 855 528 835 524 C825 500 820 470 818 440 C814 410 812 380 818 362 Z" fill="#fff" filter="url(#speck)" opacity=".55"/>
 <path d="M818 362 C830 356 870 350 885 352 C900 365 912 385 912 410 C905 430 906 455 905 480 L905 520 C880 526 855 528 835 524 C825 500 820 470 818 440 C814 410 812 380 818 362 Z" fill="#fff" filter="url(#dspeck)" opacity=".4"/>
 <path d="M846 356 L871 352 L894 520 L868 524 Z" fill="url(#aorta)" opacity=".95" filter="url(#warp)"/>
 <!-- left kidney -->
 <path d="M794 366 C805 372 809 385 809 418 C808 440 800 452 790 462 C785 475 786 495 785 505 C782 520 770 525 755 524 C740 521 730 505 729 478 C730 450 735 425 749 398 C758 380 772 366 794 366 Z" fill="url(#kidL)"/>
 <path d="M794 366 C805 372 809 385 809 418 C808 440 800 452 790 462 C785 475 786 495 785 505 C782 520 770 525 755 524 C740 521 730 505 729 478 C730 450 735 425 749 398 C758 380 772 366 794 366 Z" fill="#fff" filter="url(#speck)" opacity="0.7"/>
 <path d="M794 366 C805 372 809 385 809 418 C808 440 800 452 790 462 C785 475 786 495 785 505 C782 520 770 525 755 524 C740 521 730 505 729 478 C730 450 735 425 749 398 C758 380 772 366 794 366 Z" fill="#fff" filter="url(#dspeck)" opacity="0.7"/>
 <path d="M794 366 C805 372 809 385 809 418 C808 440 800 452 790 462 C785 475 786 495 785 505 C782 520 770 525 755 524 C740 521 730 505 729 478 C730 450 735 425 749 398 C758 380 772 366 794 366 Z" fill="url(#kshade)"/>
 <!-- right kidney -->
 <path d="M930 384 C950 383 975 400 997 428 C1008 448 1011 470 1006 492 C1000 508 990 515 972 515 C958 512 948 498 946 480 C940 462 930 450 922 428 C917 410 917 390 930 384 Z" fill="url(#kidR)"/>
 <path d="M930 384 C950 383 975 400 997 428 C1008 448 1011 470 1006 492 C1000 508 990 515 972 515 C958 512 948 498 946 480 C940 462 930 450 922 428 C917 410 917 390 930 384 Z" fill="#fff" filter="url(#speck)" opacity="0.7"/>
 <path d="M930 384 C950 383 975 400 997 428 C1008 448 1011 470 1006 492 C1000 508 990 515 972 515 C958 512 948 498 946 480 C940 462 930 450 922 428 C917 410 917 390 930 384 Z" fill="#fff" filter="url(#dspeck)" opacity="0.7"/>
 <path d="M930 384 C950 383 975 400 997 428 C1008 448 1011 470 1006 492 C1000 508 990 515 972 515 C958 512 948 498 946 480 C940 462 930 450 922 428 C917 410 917 390 930 384 Z" fill="url(#kshade)"/>
 <!-- vessels -->
 <g stroke="#4a1424" fill="none" opacity="0.55" stroke-linecap="round">
  <path d="M886 404 C898 407 910 410 922 416" stroke-width="3.6"/>
  <path d="M878 472 C868 490 858 510 850 533" stroke-width="3.8"/>
  <path d="M884 472 C882 492 878 512 876 532" stroke-width="3.4"/>
  <path d="M888 470 C900 485 918 505 929 525" stroke-width="3.6"/>
  <path d="M895 448 C908 452 922 460 930 480" stroke-width="3"/>
  <path d="M890 480 C905 492 915 510 915 535" stroke-width="3"/>
  <path d="M858 372 C845 390 835 410 826 432" stroke-width="2.6"/>
  <path d="M808 456 C800 440 796 420 802 400" stroke-width="2.6"/>
 </g>
 <g stroke="#c89a9c" fill="none" opacity="0.95" stroke-linecap="round">
  <path d="M886 404 C898 407 910 410 922 416" stroke-width="2"/>
  <path d="M878 472 C868 490 858 510 850 533" stroke-width="2.2"/>
  <path d="M884 472 C882 492 878 512 876 532" stroke-width="1.8"/>
  <path d="M888 470 C900 485 918 505 929 525" stroke-width="2"/>
  <path d="M895 448 C908 452 922 460 930 480" stroke-width="1.6"/>
  <path d="M890 480 C905 492 915 510 915 535" stroke-width="1.6"/>
  <path d="M858 372 C845 390 835 410 826 432" stroke-width="1.4"/>
  <path d="M808 456 C800 440 796 420 802 400" stroke-width="1.4"/>
  <path d="M878 408 C882 430 884 450 886 468" stroke-width="2.4" stroke="#d8b8c0" opacity=".7"/>
 </g>
 <g stroke="#b04858" stroke-width="1.8" fill="none" opacity="0.9">
  <path d="M903 352 C915 362 932 366 942 357 C950 349 962 352 959 362 C955 373 940 370 944 359"/>
  <path d="M959 362 C965 355 968 346 972 350 C976 358 980 374 992 392"/>
  <path d="M975 352 C982 348 990 352 986 360"/>
  <path d="M870 350 C885 345 895 352 892 362"/>
 </g>
 <path d="M815 342 L882 337 L884 347 L817 351 Z" fill="#141410" opacity="0.9"/>
 <path d="M852 524 L902 520 L903 527 L852 530 Z" fill="#2a1a10" opacity="0.7"/>
</svg>
<svg style="left:0;top:0" width="1366" height="768">
 <g stroke="#f8847c" stroke-width="2.6" fill="none" stroke-linejoin="round">
  <path d="M707 354 L987 326 L1037 332 L711 365 Z"/>
  <path d="M711 365 L731 562 L1050 520 L1037 332"/>
  <path d="M707 354 L724 523 L731 562"/>
  <path d="M1000 489 L1050 520"/>
 </g>
 <g fill="#e6e6e6">
  <circle cx="707" cy="354" r="4"/><circle cx="711" cy="365" r="4.5"/><circle cx="987" cy="326" r="4"/><circle cx="1037" cy="332" r="4.5"/>
  <circle cx="724" cy="523" r="4"/><circle cx="1000" cy="489" r="4"/><circle cx="731" cy="562" r="4.5"/><circle cx="1050" cy="520" r="4.5"/>
 </g>
 <circle cx="863" cy="344" r="4" fill="#0000ff"/><circle cx="879" cy="522" r="4" fill="#0000ff"/>
 <circle cx="718" cy="451" r="4" fill="#ff0000"/><circle cx="1017" cy="417" r="4" fill="#ff0000"/>
 <circle cx="872" cy="433" r="4" fill="#ff8000"/>
 <text x="872" y="432.2" font-family="Liberation Sans" font-weight="bold" font-size="15.8" fill="#1a0a10" opacity="0.85" textLength="164" lengthAdjust="spacingAndGlyphs">Volume rendering ROI</text>
 <text x="871" y="431.2" font-family="Liberation Sans" font-weight="bold" font-size="15.8" fill="#f4948a" textLength="164" lengthAdjust="spacingAndGlyphs">Volume rendering ROI</text>
</svg>

<!-- bottom strip -->
<div class="a" style="left:1333px;top:687px;width:32px;height:31px;border:1px solid #a6a6a6;border-radius:3px;background:#fbfbfb"></div>
<div class="a" style="left:1337px;top:690px;width:24px;height:24px;border-radius:50%;background:#9c9c9c"></div>
<svg style="left:1337px;top:690px" width="24" height="24"><path d="M7.5 7.5 L16.5 16.5 M16.5 7.5 L7.5 16.5" stroke="#fff" stroke-width="1.6"/></svg>

<!-- taskbar -->
<div class="a" style="left:0;top:720px;width:1366px;height:48px;background:#e7e0f1"></div>
<div class="a" style="left:355px;top:728.5px;width:218px;height:30.5px;border-radius:16px;background:#f8f5fb;border:1px solid #dcd6e4"></div>
<div class="a" style="left:1019px;top:725px;width:38px;height:38px;border-radius:5px;background:#f3eff8;border:1px solid #e8e2f0"></div>
<div class="t" style="left:51px;top:731.5px;font-size:12px;color:#111;transform:scaleX(.93)">21°C</div>
<div class="t" style="left:51px;top:746.5px;font-size:12.5px;color:#444;transform:scaleX(.98)">Despejado</div>
<div class="t" style="left:391px;top:737px;font-size:13.5px;color:#555;transform:scaleX(1.0)">Búsqueda</div>
<div class="t" style="left:1288px;top:730.5px;font-size:12px;color:#111;transform:scaleX(.99)">08:00 p. m.</div>
<div class="t" style="left:1286px;top:746px;font-size:12px;color:#111;transform:scaleX(.995)">14/05/2024</div>
<svg style="left:0;top:720px" width="1366" height="48">
 <defs>
  <linearGradient id="moon" x1="0" y1="0" x2="0" y2="1"><stop offset="0" stop-color="#f8b820"/><stop offset="1" stop-color="#e86a10"/></linearGradient>
  <linearGradient id="win" x1="0" y1="0" x2="1" y2="1"><stop offset="0" stop-color="#48d0fa"/><stop offset="1" stop-color="#0860d0"/></linearGradient>
  <linearGradient id="meet" x1="0" y1="0" x2="1" y2="1"><stop offset="0" stop-color="#9a68d8"/><stop offset="1" stop-color="#4a6ad8"/></linearGradient>
  <linearGradient id="edge" x1="0" y1="1" x2="1" y2="0"><stop offset="0" stop-color="#1478d0"/><stop offset="0.45" stop-color="#2aa8e0"/><stop offset="1" stop-color="#6ada6a"/></linearGradient>
  <linearGradient id="fold2" x1="0" y1="0" x2="0" y2="1"><stop offset="0" stop-color="#ffd85a"/><stop offset="1" stop-color="#f4b820"/></linearGradient>
 </defs>
 <!-- weather -->
 <path d="M21 21 C30 25 40 22 43 16 C45 28 36 36 28 35 C24 34.5 22 30 21 21 Z" fill="url(#moon)"/>
 <circle cx="39" cy="15" r="7.8" fill="#c42a1e"/>
 <text x="36.2" y="19.5" font-family="Liberation Sans" font-size="11" fill="#fff">1</text>
 <!-- windows -->
 <rect x="317.7" y="13" width="11.2" height="11.2" fill="url(#win)"/><rect x="330" y="13" width="11.2" height="11.2" fill="url(#win)"/>
 <rect x="317.7" y="25.2" width="11.2" height="11" fill="url(#win)"/><rect x="330" y="25.2" width="11.2" height="11" fill="url(#win)"/>
 <!-- search icon -->
 <circle cx="374.5" cy="22" r="5.6" fill="none" stroke="#222" stroke-width="1.6"/>
 <path d="M370.4 26.2 L366.5 30.2" stroke="#222" stroke-width="1.8" stroke-linecap="round"/>
 <!-- search deco -->
 <path d="M531 9 L540 37" stroke="#f05a3a" stroke-width="1.6"/>
 <path d="M548 9.5 L524 37" stroke="#22b8f0" stroke-width="1.8"/>
 <circle cx="524.6" cy="24.5" r="4.5" fill="#7a4ab0"/><circle cx="528" cy="17.5" r="2.6" fill="#f0c040"/>
 <rect x="548" y="13" width="18" height="10" rx="5" fill="#c8c8d8"/>
 <circle cx="553" cy="18" r="1.8" fill="#2a3a8a"/><circle cx="561" cy="18" r="1.8" fill="#2a3a8a"/>
 <rect x="549.5" y="24" width="14" height="8" rx="1.5" fill="#b8c0e0" stroke="#2a3a8a" stroke-width=".8"/>
 <rect x="546" y="25.5" width="4" height="4" fill="#2a3a8a"/><path d="M556.5 32 V37 M551.5 35.5 H561.5" stroke="#2a3a8a" stroke-width="1.2"/>
 <!-- task view -->
 <rect x="592" y="13" width="17.5" height="16.5" rx="1.5" fill="#f4f4f4" stroke="#e0e0e0" stroke-width=".6"/>
 <rect x="585.8" y="18.8" width="18" height="16.3" rx="1.5" fill="#262626"/>
 <rect x="592" y="18.8" width="11.8" height="10.7" fill="#c4c4c4"/>
 <!-- meet -->
 <path d="M641.3 13 A11.5 11 0 1 1 634 32 L630 35.5 L631.5 29 A11.5 11 0 0 1 641.3 13 Z" fill="url(#meet)"/>
 <rect x="634.8" y="18.8" width="9.5" height="8.7" rx="1.5" fill="#fff"/><path d="M644.5 23 L649 19.5 V27 Z" fill="#fff"/>
 <!-- edge -->
 <circle cx="686" cy="24" r="12" fill="url(#edge)"/>
 <path d="M674.5 27 C676 34 683 36.5 690 36 C694 35.5 697 33 698 30 C694 33 688 33 685 30 C682 27 683 23 686.5 21 C681 21 676.5 24 674.5 27 Z" fill="#0c4aa0"/>
 <path d="M686.5 21 C692 20 697 23 697.5 27.5 C697 29.5 694.5 30 692 29.5 C693 27 691 24.5 688 24.5 C686 24.5 684.5 26 684.5 27.5 C683.5 25 684 22.5 686.5 21 Z" fill="#e7e0f1"/>
 <!-- explorer -->
 <path d="M718 15.5 Q718 13 720.5 13 H727 L729 15 H739.5 Q742 15 742 17.5 V32 Q742 34.5 739.5 34.5 H720.5 Q718 34.5 718 32 Z" fill="url(#fold2)"/>
 <path d="M718 15.5 Q718 13 720.5 13 H727 L729.5 16.5 H718 Z" fill="#e0a418"/>
 <rect x="722" y="28" width="15.5" height="6.5" rx="1.5" fill="#1a78d8"/>
 <rect x="727" y="40" width="7" height="2.5" rx="1.2" fill="#7a7a7a"/>
 <!-- store -->
 <path d="M765 18 H782 Q785 18 785 21 V33 Q785 36 782 36 H765 Q762 36 762 33 V21 Q762 18 765 18 Z" fill="#1c4c98"/>
 <path d="M767.5 18 V14.5 Q767.5 13 769 13 H778 Q779.5 13 779.5 14.5 V18" fill="none" stroke="#30c0f0" stroke-width="1.6"/>
 <rect x="769" y="22" width="4" height="4" fill="#f25022"/><rect x="774" y="22" width="4" height="4" fill="#7fba00"/>
 <rect x="769" y="27" width="4" height="4" fill="#00a4ef"/><rect x="774" y="27" width="4" height="4" fill="#ffb900"/>
 <!-- myhp -->
 <rect x="806" y="12" width="24" height="23.7" rx="1.5" fill="#1a98d8"/>
 <text x="809" y="26.5" font-family="Liberation Sans" font-style="italic" font-size="6.5" fill="#fff">my</text>
 <text x="816.5" y="27" font-family="Liberation Serif" font-style="italic" font-weight="bold" font-size="11" fill="#fff">hp</text>
 <!-- help -->
 <circle cx="861.7" cy="24" r="10.5" fill="#1a96d8" stroke="#fff" stroke-width="1"/>
 <text x="856" y="30.5" font-family="Liberation Sans" font-weight="bold" font-size="15" fill="#fff">?</text>
 <circle cx="871.2" cy="15" r="8" fill="#f8c010"/>
 <!-- mcafee -->
 <path d="M895 12.5 L906 19.5 L917 12.5 V31 L906 36 L895 31 Z" fill="#c83232"/>
 <path d="M898.2 19 L906 24 L913.8 19 V29 L906 32.6 L898.2 29 Z" fill="#e7e0f1"/>
 <!-- chrome -->
 <circle cx="949.8" cy="23.7" r="12" fill="#e0402a"/>
 <path d="M949.8 23.7 L939.4 29.7 A12 12 0 0 0 949.8 35.7 Z" fill="#34a853"/>
 <path d="M949.8 23.7 L939.4 17.7 A12 12 0 0 0 939.4 29.7 L949.8 35.7 Z" fill="#34a853"/>
 <path d="M949.8 23.7 L960.2 17.7 A12 12 0 0 1 949.8 35.7 Z" fill="#fbbc04"/>
 <circle cx="949.8" cy="23.7" r="5.6" fill="#fff"/><circle cx="949.8" cy="23.7" r="4.4" fill="#3a7ae8"/>
 <circle cx="959" cy="15" r="8" fill="#1e3038"/>
 <path d="M953 13 Q955 10 958 11 Q957 14 955 16 Z M960 9 Q964 10 965 14 Q962 13 960 12 Z M958 17 Q962 16 964 19 Q960 21 957 20 Z" fill="#7aa0a8" opacity=".8"/>
 <rect x="947" y="40" width="6.5" height="2.5" rx="1.2" fill="#7a7a7a"/>
 <!-- slicer -->
 <use href="#logo" transform="translate(981.4 11.5) scale(.87) translate(-4.7 -84.7)"/>
 <rect x="991" y="40" width="6.5" height="2.5" rx="1.2" fill="#7a7a7a"/>
 <!-- snip -->
 <rect x="1026" y="11" width="15" height="15" fill="#f0ecf4"/>
 <path d="M1028 25 V15 Q1028 13 1030 13 H1040" fill="none" stroke="#e03020" stroke-width="2.6" stroke-dasharray="2.4 1.2"/>
 <path d="M1040 15 V29 L1036.5 35 M1033 27 H1045" stroke="#8a8a8a" stroke-width="1.8" fill="none"/>
 <circle cx="1047" cy="25.5" r="3" fill="none" stroke="#2a9ae8" stroke-width="1.6"/>
 <circle cx="1038" cy="36.5" r="3" fill="none" stroke="#2a9ae8" stroke-width="1.6"/>
 <rect x="1030" y="40.2" width="15.7" height="2.5" rx="1.2" fill="#0a64d0"/>
 <!-- tray -->
 <path d="M1133.5 26.5 L1139.2 20.8 L1145 26.5" fill="none" stroke="#222" stroke-width="1.3"/>
 <path d="M1158 28.8 H1168 Q1171 28.8 1171 25.8 Q1171 23 1168 22.8 Q1167 17.5 1162 17.5 Q1158 17.5 1157 21.5 Q1155 22 1155 25 Q1155 28.8 1158 28.8 Z" fill="#777" stroke="#444" stroke-width=".8"/>
 <path d="M1180 24 A8 8 0 0 1 1195 20 M1195 16 V20.5 H1190.5" fill="none" stroke="#222" stroke-width="1.3"/>
 <path d="M1196 28 A8 8 0 0 1 1181 30 M1181 33 V29 H1185" fill="none" stroke="#222" stroke-width="1.3"/>
 <circle cx="1191.2" cy="28.1" r="4.2" fill="#f00000"/>
 <path d="M1207.5 22.5 A12 12 0 0 1 1222.5 22.5 M1210 25.3 A8 8 0 0 1 1220 25.3 M1212.5 28 A4.5 4.5 0 0 1 1217.5 28" fill="none" stroke="#222" stroke-width="1.3"/>
 <circle cx="1215" cy="29.5" r="1.1" fill="#222"/>
 <path d="M1231.5 22 H1235 L1239.5 18.5 V30.5 L1235 27 H1231.5 Z" fill="none" stroke="#222" stroke-width="1.2"/>
 <path d="M1241.5 21.5 Q1243.5 24.5 1241.5 27.5 M1244 19.5 Q1247 24.5 1244 29.5" fill="none" stroke="#222" stroke-width="1.1"/>
 <rect x="1255.5" y="19.5" width="14" height="9" rx="2" fill="none" stroke="#222" stroke-width="1.2"/>
 <rect x="1257.5" y="21.5" width="2.6" height="5" fill="#222"/>
 <rect x="1270" y="22.5" width="1.5" height="3.2" fill="#222"/>
</svg>
</body></html>
